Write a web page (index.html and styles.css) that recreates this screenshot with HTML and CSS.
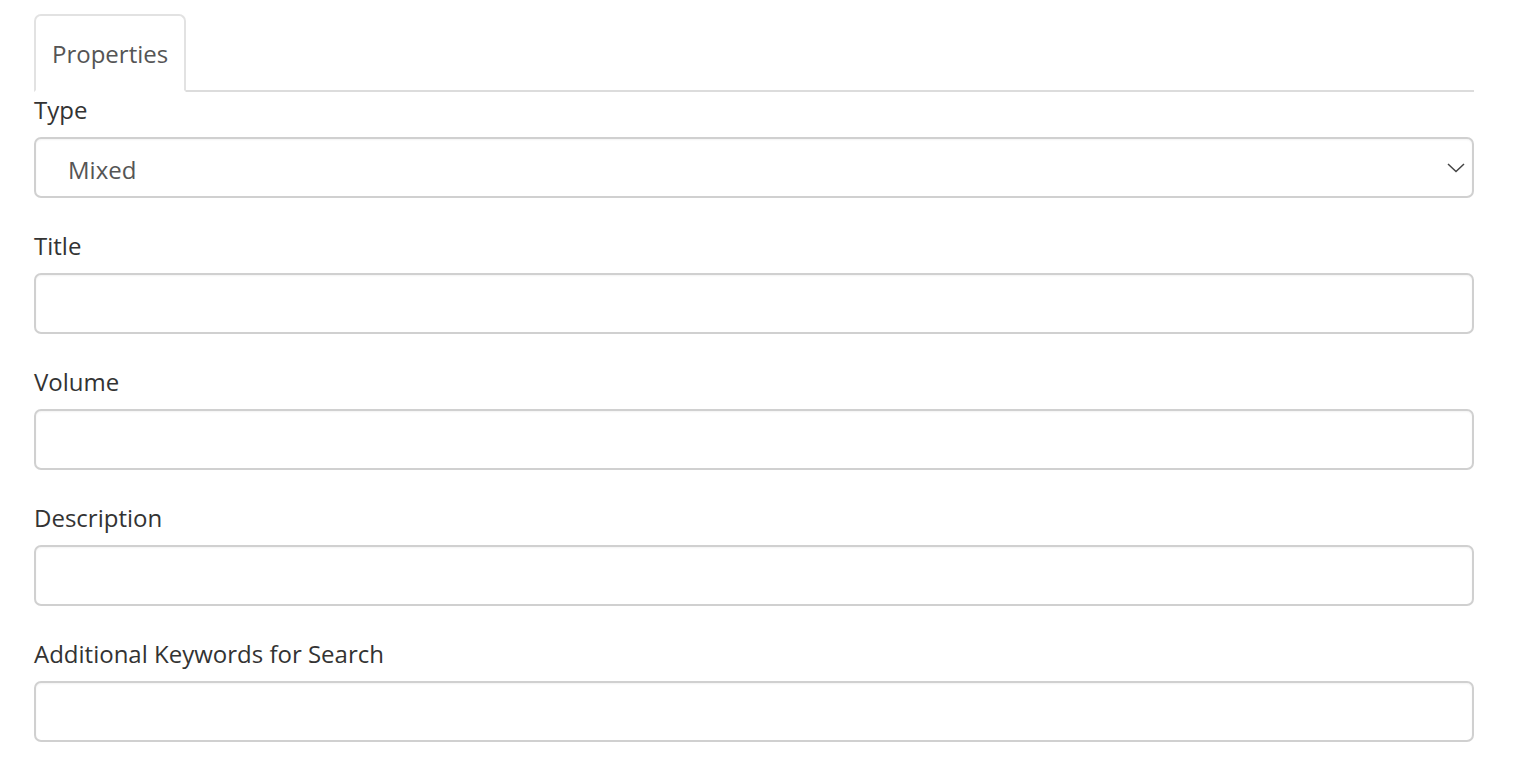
FILE: index.html
```html
<!DOCTYPE html>
<html>
<head>
<meta charset="utf-8">
<link rel="stylesheet" href="styles.css">
</head>
<body>
<div class="panel">
  <ul class="tabs">
    <li class="tab active">Properties</li>
  </ul>
  <form class="form">
    <div class="group first">
      <label class="label">Type</label>
      <div class="select-wrap">
        <select class="control select">
          <option>Mixed</option>
        </select>
        <svg class="chevron" width="18" height="10" viewBox="0 0 18 10"><path d="M1 1 L9 8.5 L17 1" fill="none" stroke="#444" stroke-width="1.5"/></svg>
      </div>
    </div>
    <div class="group">
      <label class="label">Title</label>
      <input class="control" type="text">
    </div>
    <div class="group">
      <label class="label">Volume</label>
      <input class="control" type="text">
    </div>
    <div class="group">
      <label class="label">Description</label>
      <input class="control" type="text">
    </div>
    <div class="group">
      <label class="label">Additional Keywords for Search</label>
      <input class="control" type="text">
    </div>
  </form>
</div>
</body>
</html>
```
FILE: styles.css
```css
html, body {
  margin: 0;
  padding: 0;
  background: #fff;
}
body {
  font-family: "Open Sans", "Noto Sans", sans-serif;
  color: #333;
}
.panel {
  width: 1440px;
  padding: 14px 0 0 34px;
}
.tabs {
  list-style: none;
  margin: 0;
  padding: 0;
  display: flex;
  border-bottom: 2px solid #dcdcdc;
}
.tab {
  box-sizing: border-box;
  height: 78px;
  padding: 0 16px;
  display: flex;
  align-items: center;
  font-size: 24px;
  color: #555;
  border: 2px solid #e2e2e2;
  border-bottom-color: #fff;
  border-radius: 7px 7px 0 0;
  background: #fff;
  margin-bottom: -2px;
}
.form {
  display: flex;
  flex-direction: column;
}
.group {
  display: flex;
  flex-direction: column;
  margin-top: 33px;
}
.group.first {
  margin-top: 3px;
}
.label {
  font-size: 24px;
  line-height: 30px;
  color: #333;
  margin-bottom: 12px;
}
.control {
  box-sizing: border-box;
  width: 1440px;
  height: 61px;
  border: 2px solid #d0d0d0;
  border-radius: 7px;
  background: #fff;
  box-shadow: inset 0 1px 2px rgba(0,0,0,0.05);
  font-family: "Open Sans", "Noto Sans", sans-serif;
  font-size: 24px;
  color: #555;
  padding: 4px 32px 0;
  margin: 0;
  outline: none;
}
.select-wrap {
  position: relative;
}
.select {
  appearance: none;
  -webkit-appearance: none;
  display: block;
}
.chevron {
  position: absolute;
  right: 9px;
  top: 26px;
}
```
